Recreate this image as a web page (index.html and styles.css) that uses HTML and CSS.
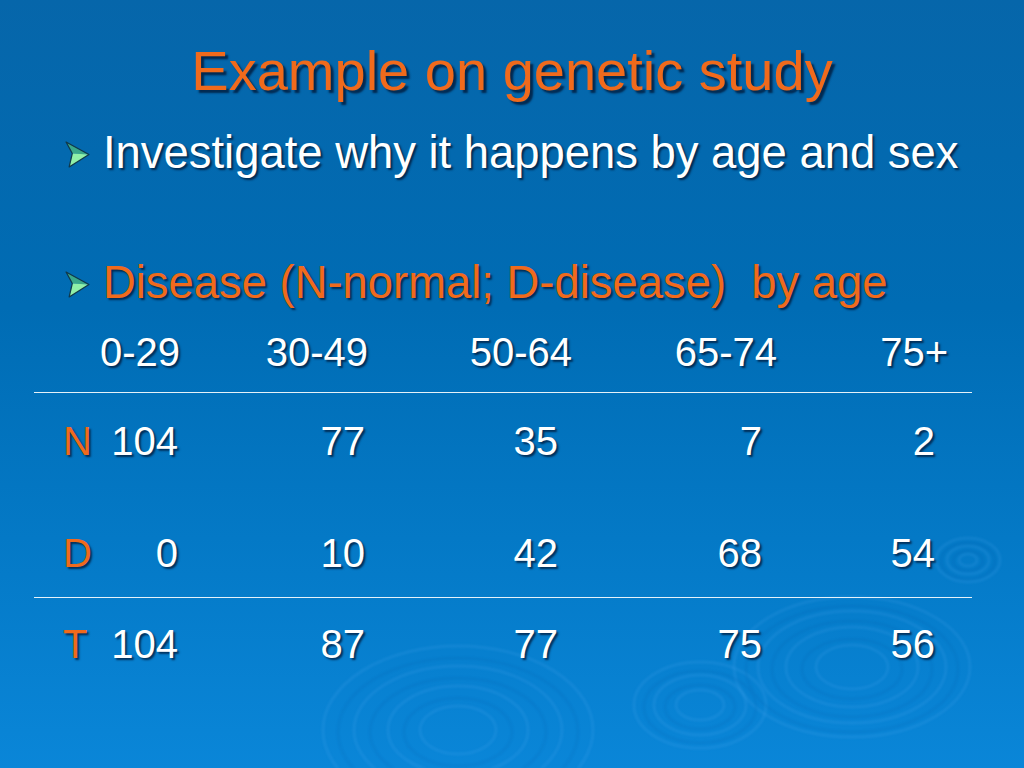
FILE: index.html
```html
<!DOCTYPE html>
<html>
<head>
<meta charset="utf-8">
<link rel="stylesheet" href="styles.css">
</head>
<body>
<div class="slide">
  <svg class="ripples" width="1024" height="768" viewBox="0 0 1024 768" aria-hidden="true">
    <g fill="none">
      <g class="light">
        <ellipse cx="968" cy="560" rx="32" ry="22"/>
        <ellipse cx="968" cy="560" rx="21" ry="14"/>
        <ellipse cx="968" cy="560" rx="9" ry="6"/>
        <ellipse cx="852" cy="667" rx="118" ry="70"/>
        <ellipse cx="852" cy="667" rx="94" ry="56"/>
        <ellipse cx="852" cy="667" rx="66" ry="40"/>
        <ellipse cx="852" cy="667" rx="36" ry="22"/>
        <ellipse cx="458" cy="730" rx="135" ry="84"/>
        <ellipse cx="458" cy="730" rx="104" ry="64"/>
        <ellipse cx="458" cy="730" rx="70" ry="44"/>
        <ellipse cx="458" cy="730" rx="38" ry="24"/>
        <ellipse cx="700" cy="705" rx="66" ry="43"/>
        <ellipse cx="700" cy="705" rx="46" ry="30"/>
        <ellipse cx="700" cy="705" rx="24" ry="15"/>
      </g>
      <g class="dark">
        <ellipse cx="968" cy="561" rx="27" ry="18"/>
        <ellipse cx="968" cy="561" rx="15" ry="10"/>
        <ellipse cx="852" cy="669" rx="106" ry="63"/>
        <ellipse cx="852" cy="669" rx="80" ry="48"/>
        <ellipse cx="852" cy="669" rx="50" ry="30"/>
        <ellipse cx="458" cy="732" rx="120" ry="74"/>
        <ellipse cx="458" cy="732" rx="88" ry="54"/>
        <ellipse cx="458" cy="732" rx="54" ry="34"/>
        <ellipse cx="700" cy="707" rx="56" ry="36"/>
        <ellipse cx="700" cy="707" rx="35" ry="22"/>
      </g>
    </g>
  </svg>

  <h1 class="title">Example on genetic study</h1>

  <ul class="bullets">
    <li class="bullet white">
      <svg class="arrow" width="24" height="26" viewBox="0 0 24 26"><polygon points="1,1 23,13 7,12" fill="#3aa88a"/><polygon points="7,12 23,13 4,25" fill="#90f0a8"/><polygon points="1,1 23,13 4,25 7,12" fill="none" stroke="#10384a" stroke-width="1.2" stroke-linejoin="round"/></svg>
      <span>Investigate why it happens by age and sex</span>
    </li>
    <li class="bullet orange second">
      <svg class="arrow" width="24" height="26" viewBox="0 0 24 26"><polygon points="1,1 23,13 7,12" fill="#3aa88a"/><polygon points="7,12 23,13 4,25" fill="#90f0a8"/><polygon points="1,1 23,13 4,25 7,12" fill="none" stroke="#10384a" stroke-width="1.2" stroke-linejoin="round"/></svg>
      <span>Disease (N-normal; D-disease)&nbsp; by age</span>
    </li>
  </ul>

  <div class="table">
    <div class="head">
      <span></span><span>0-29</span><span>30-49</span><span>50-64</span><span>65-74</span><span>75+</span>
    </div>
    <div class="body top-rule">
      <span class="lab">N</span><span>104</span><span>77</span><span>35</span><span>7</span><span>2</span>
      <span class="lab">D</span><span>0</span><span>10</span><span>42</span><span>68</span><span>54</span>
    </div>
    <div class="body total top-rule">
      <span class="lab">T</span><span>104</span><span>87</span><span>77</span><span>75</span><span>56</span>
    </div>
  </div>
</div>
</body>
</html>
```

FILE: styles.css
```css
html, body {
  margin: 0;
  padding: 0;
}

body {
  width: 1024px;
  height: 768px;
  overflow: hidden;
  font-family: "Liberation Sans", Arial, sans-serif;
}

.slide {
  position: relative;
  width: 1024px;
  height: 768px;
  overflow: hidden;
  background: linear-gradient(180deg, #0666aa 0%, #006cb4 40%, #0479c6 70%, #0a86d8 100%);
  display: flex;
  flex-direction: column;
}

.ripples {
  position: absolute;
  left: 0;
  top: 0;
  filter: blur(1px);
}

.ripples .light ellipse {
  stroke: rgba(90, 175, 245, 0.14);
  stroke-width: 3;
}

.ripples .dark ellipse {
  stroke: rgba(0, 70, 150, 0.1);
  stroke-width: 2;
}

.title {
  position: relative;
  margin: 39px 0 0 0;
  font-size: 56px;
  line-height: 64px;
  font-weight: normal;
  text-align: center;
  color: #f06a1c;
  text-shadow: 3px 3px 2px rgba(0, 20, 50, 0.75);
}

.bullets {
  position: relative;
  list-style: none;
  margin: 23px 0 0 0;
  padding: 0 0 0 65px;
}

.bullet {
  display: flex;
  align-items: center;
  gap: 13px;
  font-size: 45.4px;
  line-height: 54px;
  white-space: nowrap;
  text-shadow: 2px 2px 2px rgba(0, 20, 50, 0.75);
}

.bullet.second {
  margin-top: 76px;
}

.arrow {
  flex: none;
  width: 25px;
  height: 27px;
  margin-top: 3px;
}

.white { color: #ffffff; }
.orange { color: #f06a1c; }

.table {
  position: relative;
  margin: 18px 52px 0 34px;
  font-size: 40px;
  line-height: 48px;
  color: #ffffff;
  white-space: nowrap;
  text-shadow: 2px 2px 2px rgba(0, 20, 50, 0.75);
}

.head {
  display: grid;
  grid-template-columns: 37px 80px 188px 204px 205px 171px;
  padding-left: 29px;
  padding-bottom: 16px;
}

.head span,
.body span {
  text-align: right;
}

.body {
  display: grid;
  grid-template-columns: 37px 78px 187px 193px 204px 173px;
  padding-left: 29px;
  row-gap: 64px;
  padding-top: 24px;
  padding-bottom: 20px;
}

.top-rule {
  border-top: 1px solid rgba(255, 255, 255, 0.9);
}

.body.total {
  padding-top: 22px;
  padding-bottom: 0;
}

.body .lab {
  text-align: left;
  color: #f06a1c;
}
```
